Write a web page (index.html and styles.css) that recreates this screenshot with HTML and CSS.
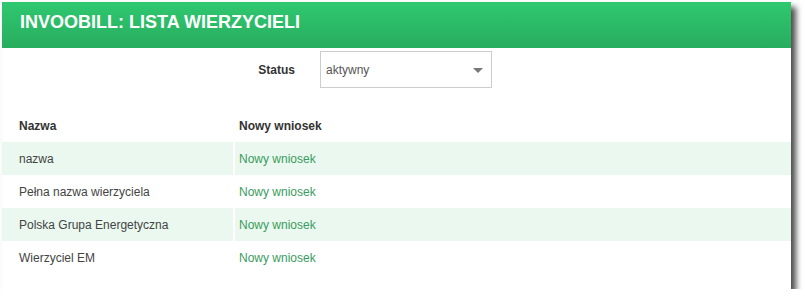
FILE: index.html
```html
<!DOCTYPE html>
<html lang="pl">
<head>
<meta charset="utf-8">
<title>INVOOBILL: LISTA WIERZYCIELI</title>
<link rel="stylesheet" href="styles.css">
</head>
<body>
<div class="panel">
  <div class="header"><h1 class="title">INVOOBILL: LISTA WIERZYCIELI</h1></div>
  <div class="filter">
    <span class="filter-label">Status</span>
    <div class="select">
      <span class="select-value">aktywny</span>
      <span class="select-arrow"></span>
    </div>
  </div>
  <div class="table">
    <div class="row head">
      <div class="cell c1">Nazwa</div>
      <div class="cell c2">Nowy wniosek</div>
    </div>
    <div class="row odd">
      <div class="cell c1">nazwa</div>
      <div class="cell c2"><a class="link" href="#">Nowy wniosek</a></div>
    </div>
    <div class="row">
      <div class="cell c1">Pełna nazwa wierzyciela</div>
      <div class="cell c2"><a class="link" href="#">Nowy wniosek</a></div>
    </div>
    <div class="row odd">
      <div class="cell c1">Polska Grupa Energetyczna</div>
      <div class="cell c2"><a class="link" href="#">Nowy wniosek</a></div>
    </div>
    <div class="row">
      <div class="cell c1">Wierzyciel EM</div>
      <div class="cell c2"><a class="link" href="#">Nowy wniosek</a></div>
    </div>
  </div>
</div>
</body>
</html>
```
FILE: styles.css
```css
html, body {
  margin: 0;
  padding: 0;
  background: #ffffff;
}
body {
  font-family: "Liberation Sans", Arial, sans-serif;
  font-size: 12px;
  color: #444444;
}
.panel {
  margin: 2px 0 0 2px;
  width: 789px;
  height: 287px;
  background: #ffffff;
  box-shadow: 5px 5px 6px rgba(0, 0, 0, 0.7);
}
.header {
  height: 46px;
  background: linear-gradient(#2fc870, #28ad5f);
  padding-left: 18px;
  box-sizing: border-box;
}
.title {
  margin: 0;
  font-size: 18px;
  line-height: 40px;
  font-weight: bold;
  color: #ffffff;
}
.filter {
  display: flex;
  align-items: center;
  padding-top: 3px;
}
.filter-label {
  width: 293px;
  text-align: right;
  font-weight: bold;
  color: #333333;
}
.select {
  margin-left: 25px;
  width: 172px;
  height: 37px;
  box-sizing: border-box;
  border: 1px solid #cccccc;
  display: flex;
  align-items: center;
  justify-content: space-between;
  padding: 0 8px 0 5px;
}
.select-value {
  color: #555555;
}
.select-arrow {
  width: 0;
  height: 0;
  border-left: 5px solid transparent;
  border-right: 5px solid transparent;
  border-top: 5px solid #777777;
  margin-top: 1px;
}
.table {
  margin-top: 22px;
}
.row {
  display: grid;
  grid-template-columns: 231px 1fr;
  column-gap: 2px;
  height: 33px;
}
.row.head {
  height: 32px;
  font-weight: bold;
  color: #333333;
}
.cell {
  display: flex;
  align-items: center;
}
.c1 {
  padding-left: 17px;
}
.c2 {
  padding-left: 4px;
}
.row.odd .cell {
  background: #eaf8ef;
}
.link {
  color: #3a9c5e;
  text-decoration: none;
}
```
